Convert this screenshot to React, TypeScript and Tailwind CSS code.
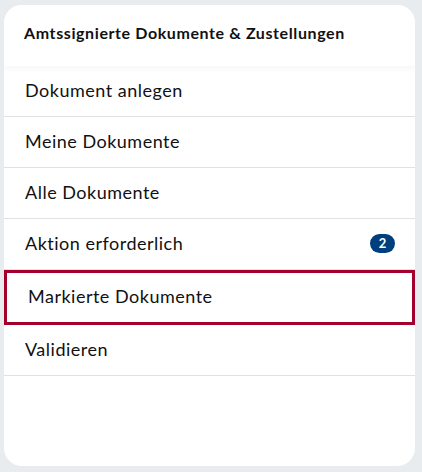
const items = [
  { label: 'Dokument anlegen' },
  { label: 'Meine Dokumente' },
  { label: 'Alle Dokumente' },
  { label: 'Aktion erforderlich', badge: 2 },
  { label: 'Markierte Dokumente', active: true },
  { label: 'Validieren' },
];

export default function App() {
  return (
    <div className="h-[472px] w-[422px] bg-[#e8ecef] pl-[4px] pr-[7px] pt-[5px] pb-[6px] font-['Lato',sans-serif] text-[#111]">
      <div className="flex h-full flex-col overflow-hidden rounded-[18px] bg-white">
        <header className="relative z-10 flex h-[61px] shrink-0 items-center bg-white px-[20px] pb-[5px] shadow-[0_3px_6px_rgba(0,0,0,0.04)]">
          <h1 className="text-[16px] font-bold tracking-[0.6px]">Amtssignierte Dokumente &amp; Zustellungen</h1>
        </header>
        <nav className="flex flex-col">
          {items.map((it) =>
            it.active ? (
              <div
                key={it.label}
                className="flex h-[55px] items-center border-[3px] border-[#a3002e] pl-[21px] pr-[18px] pb-[2px] text-[18px] tracking-[0.5px]"
              >
                {it.label}
              </div>
            ) : (
              <div
                key={it.label}
                className="flex h-[51px] items-center justify-between border-b border-[#dfe1e3] pl-[21px] pr-[20px] pb-[1px] text-[18px] tracking-[0.5px]"
              >
                <span>{it.label}</span>
                {it.badge ? (
                  <span className="flex h-[19px] w-[25px] items-center justify-center rounded-full bg-[#003f7f] text-[13px] font-bold leading-none tracking-normal text-white">
                    {it.badge}
                  </span>
                ) : null}
              </div>
            )
          )}
        </nav>
      </div>
    </div>
  );
}
